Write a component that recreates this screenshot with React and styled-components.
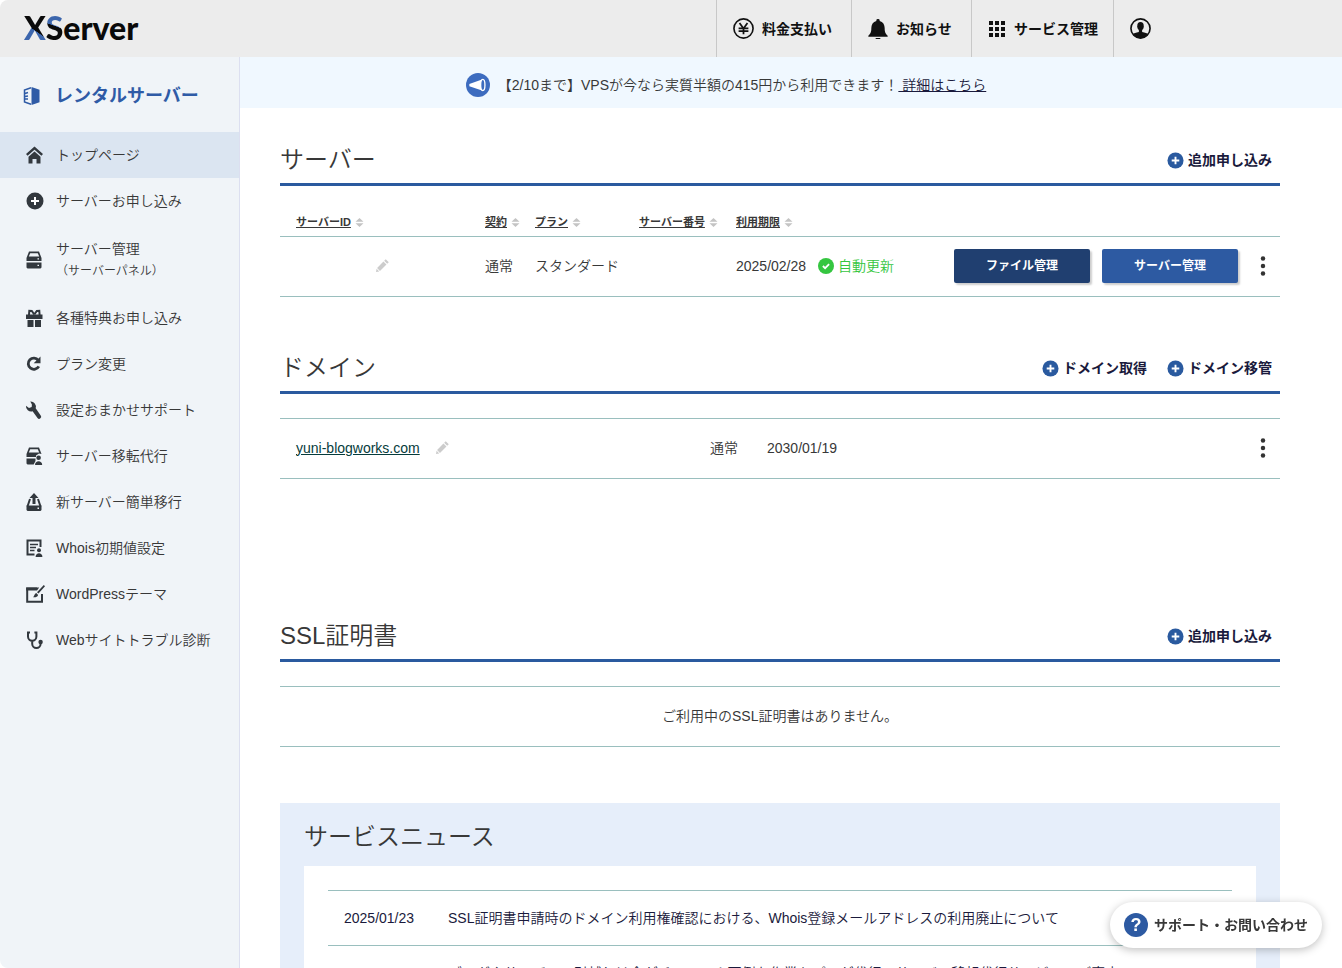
import React from 'react';
import styled, { createGlobalStyle } from 'styled-components';

const menu = [
  { icon: 'home', label: 'トップページ', active: true },
  { icon: 'plus', label: 'サーバーお申し込み' },
  { icon: 'server', label: 'サーバー管理', sub: '（サーバーパネル）' },
  { icon: 'gift', label: '各種特典お申し込み' },
  { icon: 'reload', label: 'プラン変更' },
  { icon: 'wrench', label: '設定おまかせサポート' },
  { icon: 'serverUser', label: 'サーバー移転代行' },
  { icon: 'upload', label: '新サーバー簡単移行' },
  { icon: 'whois', label: 'Whois初期値設定' },
  { icon: 'theme', label: 'WordPressテーマ' },
  { icon: 'scope', label: 'Webサイトトラブル診断' },
];

const columns = ['サーバーID', '契約', 'プラン', 'サーバー番号', '利用期限'];

const news = [
  {
    date: '2025/01/23',
    title:
      'SSL証明書申請時のドメイン利用権確認における、Whois登録メールアドレスの利用廃止について',
  },
  {
    date: '',
    title:
      'ブログやサーバーの引越しは今がチャンス！面倒な作業もプロが代行・サーバー移転代行サービスのご案内',
  },
];

const shapes = {
  home: (
    <>
      <path d="M.8 8.800 8.500 2l7.700 6.800" fill="none" stroke="currentColor" strokeWidth="2.400" />
      <path d="M2.500 10.800 8.500 5.600l6 5.200V17.500h-4v-4.600H6.500v4.600h-4z" />
    </>
  ),
  plus: (
    <>
      <circle cx="9" cy="9" r="8.500" />
      <path d="M9 5v8M5 9h8" stroke="#fff" strokeWidth="2" />
    </>
  ),
  server: (
    <>
      <path
        fillRule="evenodd"
        d="M3 .5h10L15.500 7v3H.5V7zM4.200 2.200 2.800 5.500h10.400l-1.400-3.300zM11.500 7.200v1.300H13V7.200z"
      />
      <path fillRule="evenodd" d="M.5 11.500h15v5l-1 1h-13l-1-1zM11.500 13.800v1.300H13v-1.300z" />
    </>
  ),
  gift: (
    <>
      <path d="M0 5.500h16.500V10H0zM1.500 11h6v7h-6zM9 11h6v7H9z" />
      <path
        d="M8.300 5.500 5.800 2 3.300 1.800 3 6M8.300 5.500 10.800 2l2.500-.2.3 4.200"
        fill="none"
        stroke="currentColor"
        strokeWidth="2"
      />
    </>
  ),
  reload: (
    <>
      <path d="M12.300 5.300A5.600 5.600 0 1 0 12.800 11.400" fill="none" stroke="currentColor" strokeWidth="2.800" />
      <path d="M14.500 1.500v6.800H7.700z" />
    </>
  ),
  wrench: (
    <path d="M4.300.5A5.200 5.200 0 0 1 9.700 7.200l5 7.200a2 2 0 0 1-3.200 2.600L6.600 10.300A5.200 5.200 0 0 1 0 4.700l3 2.400 2.700-1 .2-2.600z" />
  ),
  serverUser: (
    <>
      <path
        fillRule="evenodd"
        d="M3 .5h10L15.500 7 13 6.500 10 8.500V10H.5V7zM4.200 2.200 2.800 5.500h10.400l-1.400-3.300z"
      />
      <path d="M.5 11.500h9V14l-1.800 3.500H1.500l-1-1z" />
      <circle cx="12.600" cy="10.800" r="2.300" />
      <path d="M9 18c0-5 7.200-5 7.200 0z" />
    </>
  ),
  upload: (
    <>
      <path d="M8 0l4.500 5h-3v6h-3V5h-3z" />
      <path d="M4 6 1.500 13.500M12 6l2.500 7.500" fill="none" stroke="currentColor" strokeWidth="2" />
      <path fillRule="evenodd" d="M.5 12.500h15V17l-1 1h-13l-1-1zM11.500 14.500V16H13v-1.500z" />
    </>
  ),
  whois: (
    <>
      <path d="M8.500 15.500h-7v-14h13V8" fill="none" stroke="currentColor" strokeWidth="2" />
      <path d="M4 5.500h8M4 8.500h6M4 11.500h4.500" stroke="currentColor" strokeWidth="1.500" />
      <circle cx="13" cy="11.300" r="2" />
      <path d="M9.600 18c0-5 6.800-5 6.800 0z" />
    </>
  ),
  theme: (
    <>
      <path d="M11 3.500H1.200v13.300H16V9" fill="none" stroke="currentColor" strokeWidth="2" />
      <path d="M.2 2.500h13l-2.200 3H.2z" />
      <path d="m17.800 0 1.200 1.200-6.500 7.300-1.500-1.300zM10.300 8l1.800 1.900c-.8 2.200-2.500 2.500-5 2.300 1.300-1 1.200-3.600 3.200-4.200z" />
    </>
  ),
  scope: (
    <>
      <path
        d="M4 1.500H2v4a4.200 4.200 0 0 0 8.400 0v-4h-2M6.200 9.500v3.300a4.200 4.200 0 0 0 8.400 0V12"
        fill="none"
        stroke="currentColor"
        strokeWidth="2"
      />
      <circle cx="14.600" cy="11" r="2.200" />
    </>
  ),
  bell: (
    <path d="M9 0a1.500 1.500 0 0 1 1.500 1.700C13.500 2.500 15 5 15 8c0 3.800.8 5.300 2.700 7v1H.3v-1C2.200 13.300 3 11.800 3 8c0-3 1.500-5.500 4.500-6.300A1.500 1.500 0 0 1 9 0zM6.800 17h4.400a2.200 1.600 0 0 1-4.400 0z" />
  ),
  yen: (
    <>
      <circle cx="9" cy="9" r="8.200" fill="none" stroke="currentColor" strokeWidth="1.400" />
      <path
        d="M5.600 4.300 9 9l3.400-4.700M9 9v5M4.800 8.800h8.400M4.800 11.300h8.400"
        fill="none"
        stroke="currentColor"
        strokeWidth="1.500"
      />
    </>
  ),
  grid: (
    <path d="M1 1h4v4H1zM7 1h4v4H7zM13 1h4v4h-4zM1 7h4v4H1zM7 7h4v4H7zM13 7h4v4h-4zM1 13h4v4H1zM7 13h4v4H7zM13 13h4v4h-4z" />
  ),
  account: (
    <>
      <circle cx="9" cy="9" r="8.200" fill="none" stroke="currentColor" strokeWidth="1.400" />
      <ellipse cx="9" cy="7" rx="2.800" ry="3.500" />
      <path d="M7.600 9h2.800v3c2.500.5 4.500 1 5.200 2a8.200 8.200 0 0 1-13.200 0c.7-1 2.700-1.500 5.200-2z" />
    </>
  ),
  rental: (
    <>
      <path d="M8.500 0 16.500 2.800v12.400L8.500 18z" />
      <path
        d="M8 .8 1.500 3v12L8 17.200M2 6.500l3-1M2 9.500l3-.5M2 12h3"
        fill="none"
        stroke="currentColor"
        strokeWidth="1.500"
      />
    </>
  ),
  megaphone: (
    <>
      <circle cx="9" cy="9" r="9" />
      <path d="M2.500 8.200 12 4.800v8.400L2.500 10z" fill="#fff" />
      <ellipse cx="12.600" cy="9" rx="1.600" ry="4.200" fill="currentColor" stroke="#fff" strokeWidth="1" />
    </>
  ),
  pencil: <path d="M13.500.3 17.700 4.500 15.500 6.700 11.300 2.500zM10.300 3.500l4.200 4.200L5.500 16.500 1.500 12.500zM.8 13.500 4.500 17.200 0 18z" />,
  sort: <path d="M9 0l8 7.500H1zM1 10.500h16L9 18z" />,
  check: (
    <>
      <circle cx="9" cy="9" r="9" />
      <path d="m5.500 9 2.500 2.500 4.500-4.500" fill="none" stroke="#fff" strokeWidth="2" />
    </>
  ),
  dots: (
    <>
      <circle cx="9" cy="2.200" r="2" />
      <circle cx="9" cy="9" r="2" />
      <circle cx="9" cy="15.800" r="2" />
    </>
  ),
};

const Icon = ({ name, size = 18, color }) => (
  <Svg viewBox="0 0 18 18" $size={size} $color={color} aria-hidden="true">
    {shapes[name]}
  </Svg>
);

const SectionHead = ({ title, actions }) => (
  <Head>
    <Title>{title}</Title>
    <Actions>
      {actions.map((action) => (
        <AddLink href="#" key={action}>
          <Icon name="plus" size={17} color="#2a5a9f" />
          {action}
        </AddLink>
      ))}
    </Actions>
  </Head>
);

const App = () => {
  return (
    <>
      <GlobalStyle />
      <Page>
        <Header>
          <Logo href="#">
            <LogoX>X</LogoX>
            <LogoS>S</LogoS>erver
          </Logo>
          <HeaderNav>
            <HeaderLink href="#" $width={135}>
              <Icon name="yen" size={21} />
              料金支払い
            </HeaderLink>
            <HeaderLink href="#" $width={120}>
              <Icon name="bell" size={20} />
              お知らせ
            </HeaderLink>
            <HeaderLink href="#" $width={142}>
              <Icon name="grid" />
              サービス管理
            </HeaderLink>
            <HeaderLink href="#" $width={229} aria-label="アカウント">
              <Icon name="account" size={21} />
            </HeaderLink>
          </HeaderNav>
        </Header>
        <Body>
          <Sidebar>
            <Brand href="#">
              <Icon name="rental" />
              レンタルサーバー
            </Brand>
            {menu.map((item) => (
              <MenuLink href="#" key={item.label} $active={item.active} $tall={!!item.sub}>
                <Icon name={item.icon} />
                <span>
                  {item.label}
                  {item.sub && <Sub>{item.sub}</Sub>}
                </span>
              </MenuLink>
            ))}
          </Sidebar>
          <Main>
            <Banner>
              <Icon name="megaphone" size={24} color="#3d6cbf" />
              <p>
                【2/10まで】VPSが今なら実質半額の415円から利用できます！
                <BannerLink href="#">&nbsp;詳細はこちら</BannerLink>
              </p>
            </Banner>
            <Content>
              <Section $gap={40}>
                <SectionHead title="サーバー" actions={['追加申し込み']} />
                <Table>
                  <colgroup>
                    <Col $width={189} />
                    <Col $width={50} />
                    <Col $width={104} />
                    <Col $width={97} />
                    <Col />
                    <Col $width={342} />
                  </colgroup>
                  <thead>
                    <tr>
                      {columns.map((column) => (
                        <Th key={column}>
                          <SortButton type="button">
                            <u>{column}</u>
                            <Icon name="sort" size={9} color="#c4c4c4" />
                          </SortButton>
                        </Th>
                      ))}
                      <Th />
                    </tr>
                  </thead>
                  <tbody>
                    <tr>
                      <Td>
                        <EditButton type="button" aria-label="編集" $indent={80}>
                          <Icon name="pencil" size={13} color="#ccc" />
                        </EditButton>
                      </Td>
                      <Td>通常</Td>
                      <Td>スタンダード</Td>
                      <Td />
                      <Td>
                        <Line>
                          2025/02/28
                          <AutoRenew>
                            <Icon name="check" size={16} />
                            自動更新
                          </AutoRenew>
                        </Line>
                      </Td>
                      <Td>
                        <RowActions>
                          <PanelButton type="button" $dark>
                            ファイル管理
                          </PanelButton>
                          <PanelButton type="button">サーバー管理</PanelButton>
                          <DotsButton type="button" aria-label="メニュー">
                            <Icon name="dots" size={20} />
                          </DotsButton>
                        </RowActions>
                      </Td>
                    </tr>
                  </tbody>
                </Table>
              </Section>

              <Section $gap={126}>
                <SectionHead title="ドメイン" actions={['ドメイン取得', 'ドメイン移管']} />
                <Table $lined>
                  <colgroup>
                    <Col $width={414} />
                    <Col $width={57} />
                    <Col />
                    <Col $width={60} />
                  </colgroup>
                  <tbody>
                    <tr>
                      <Td>
                        <Line>
                          <DomainLink href="#">yuni-blogworks.com</DomainLink>
                          <EditButton type="button" aria-label="編集" $indent={16}>
                            <Icon name="pencil" size={13} color="#ccc" />
                          </EditButton>
                        </Line>
                      </Td>
                      <Td>通常</Td>
                      <Td>2030/01/19</Td>
                      <Td>
                        <RowActions>
                          <DotsButton type="button" aria-label="メニュー">
                            <Icon name="dots" size={20} />
                          </DotsButton>
                        </RowActions>
                      </Td>
                    </tr>
                  </tbody>
                </Table>
              </Section>

              <Section $gap={56}>
                <SectionHead title="SSL証明書" actions={['追加申し込み']} />
                <Empty>ご利用中のSSL証明書はありません。</Empty>
              </Section>

              <News>
                <Title>サービスニュース</Title>
                <NewsList>
                  {news.map((item) => (
                    <NewsItem key={item.title}>
                      <NewsDate>{item.date}</NewsDate>
                      <NewsLink href="#">{item.title}</NewsLink>
                    </NewsItem>
                  ))}
                </NewsList>
              </News>
            </Content>
          </Main>
        </Body>
        <Support type="button">
          <Question>?</Question>
          サポート・お問い合わせ
        </Support>
      </Page>
    </>
  );
};

const GlobalStyle = createGlobalStyle`
  * {
    box-sizing: border-box;
  }

  body {
    margin: 0;
    font-family: 'Liberation Sans', 'Noto Sans CJK JP', sans-serif;
    font-size: 14px;
    font-weight: 350;
    line-height: 22px;
    color: #383838;
    background: #fff;
  }

  p, h2, ul {
    margin: 0;
    padding: 0;
  }

  a {
    color: inherit;
    text-decoration: none;
  }

  button {
    padding: 0;
    border: none;
    font: inherit;
    color: inherit;
    background: none;
    cursor: pointer;
  }
`;

const Svg = styled.svg`
  flex: none;
  display: block;
  width: ${(props) => props.$size}px;
  height: ${(props) => props.$size}px;
  color: ${(props) => props.$color || 'inherit'};
  fill: currentColor;
`;

const Page = styled.div`
  display: flex;
  flex-direction: column;
  height: 100vh;
  border-radius: 8px 0 0 8px;
  overflow: hidden;
`;

const Header = styled.header`
  flex: none;
  display: flex;
  justify-content: space-between;
  height: 57px;
  background: #ececec;
`;

const Logo = styled.a`
  padding-left: 24px;
  font-family: Lato, sans-serif;
  font-size: 32px;
  font-weight: 900;
  line-height: 56px;
  color: #0a0a0a;
`;

const LogoX = styled.span`
  color: transparent;
  background: linear-gradient(35deg, #3c66ad 44%, #0a0a0a 45%);
  background-clip: text;
`;

const LogoS = styled.span`
  color: transparent;
  background: linear-gradient(200deg, #3c66ad 46%, #0a0a0a 47%);
  background-clip: text;
`;

const HeaderNav = styled.nav`
  display: flex;
`;

const HeaderLink = styled.a`
  display: flex;
  align-items: center;
  gap: 8px;
  width: ${(props) => props.$width}px;
  padding-left: 16px;
  border-left: 1px solid #c8c8c8;
  font-weight: 700;
  color: #111;
`;

const Body = styled.div`
  flex: 1;
  display: flex;
  min-height: 0;
`;

const Sidebar = styled.nav`
  flex: none;
  width: 240px;
  border-right: 1px solid #dcdff0;
  background: #f0f4f8;
`;

const Brand = styled.a`
  display: flex;
  align-items: center;
  gap: 14px;
  height: 75px;
  padding: 2px 0 0 23px;
  font-size: 18px;
  font-weight: 700;
  color: #2f5ba6;
`;

const MenuLink = styled.a`
  display: flex;
  align-items: center;
  gap: 12px;
  height: ${(props) => (props.$tall ? 71 : 46)}px;
  padding-left: 26px;
  background: ${(props) => (props.$active ? '#dbe5f1' : 'transparent')};

  svg {
    color: #32383e;
    overflow: visible;
  }
`;

const Sub = styled.small`
  display: block;
  font-size: 12px;
`;

const Main = styled.main`
  flex: 1;
  min-width: 0;
`;

const Banner = styled.div`
  display: flex;
  align-items: center;
  justify-content: center;
  gap: 8px;
  height: 51px;
  padding: 4px 130px 0 0;
  background: #f0f8ff;
`;

const BannerLink = styled.a`
  color: #1a1a3c;
  text-decoration: underline;
`;

const Content = styled.div`
  max-width: 1000px;
  margin: 21px 40px 0;
`;

const Section = styled.section`
  margin-bottom: ${(props) => props.$gap}px;
`;

const Head = styled.div`
  display: flex;
  align-items: center;
  justify-content: space-between;
  height: 57px;
  padding: 8px 8px 0 0;
  border-bottom: 3px solid #2a5a9f;
`;

const Title = styled.h2`
  font-size: 24px;
  font-weight: 350;
  line-height: 36px;
`;

const Actions = styled.div`
  display: flex;
  gap: 20px;
`;

const AddLink = styled.a`
  display: flex;
  align-items: center;
  gap: 4px;
  font-weight: 700;
  color: #1a1a3c;
`;

const Table = styled.table`
  width: 100%;
  margin-top: ${(props) => (props.$lined ? 24 : 0)}px;
  border-top: ${(props) => (props.$lined ? '1px solid #9abfbe' : 'none')};
  border-spacing: 0;
  table-layout: fixed;
  white-space: nowrap;
`;

const Col = styled.col`
  width: ${(props) => (props.$width ? `${props.$width}px` : 'auto')};
`;

const Th = styled.th`
  height: 51px;
  padding: 22px 0 0 16px;
  border-bottom: 1px solid #9abfbe;
  text-align: left;
`;

const SortButton = styled.button`
  display: flex;
  align-items: center;
  gap: 4px;
  font-size: 11px;
  font-weight: 700;
`;

const Td = styled.td`
  height: 60px;
  padding: 0 0 2px 16px;
  border-bottom: 1px solid #9abfbe;
`;

const Line = styled.div`
  display: flex;
  align-items: center;
`;

const EditButton = styled.button`
  display: block;
  margin-left: ${(props) => props.$indent}px;
`;

const AutoRenew = styled.span`
  display: flex;
  align-items: center;
  gap: 4px;
  margin-left: 12px;
  color: #35c640;
`;

const RowActions = styled.div`
  display: flex;
  align-items: center;
  justify-content: flex-end;
  gap: 12px;
  padding-right: 7px;
`;

const PanelButton = styled.button`
  width: 136px;
  height: 34px;
  border-radius: 2px;
  font-size: 12px;
  font-weight: 700;
  color: #fff;
  background: ${(props) => (props.$dark ? '#203f70' : '#2d5aa2')};
  box-shadow: 2px 2px 2px rgba(0, 0, 0, 0.2);
`;

const DotsButton = styled.button`
  margin-left: 3px;
  color: #333;
`;

const DomainLink = styled.a`
  color: #063c3c;
  text-decoration: underline;
`;

const Empty = styled.p`
  margin-top: 24px;
  border: 1px solid #9abfbe;
  border-width: 1px 0;
  line-height: 59px;
  text-align: center;
`;

const News = styled.section`
  padding: 16px 24px 24px;
  background: #e6eefa;
`;

const NewsList = styled.ul`
  margin-top: 11px;
  padding: 24px;
  list-style: none;
  background: #fff;
`;

const NewsItem = styled.li`
  display: flex;
  padding: 16px;
  border-top: 1px solid #9abfbe;
  color: #1a1a3c;
`;

const NewsDate = styled.time`
  flex: none;
  width: 104px;
`;

const NewsLink = styled.a`
  white-space: nowrap;
`;

const Support = styled.button`
  position: fixed;
  right: 20px;
  bottom: 20px;
  display: flex;
  align-items: center;
  justify-content: center;
  gap: 6px;
  width: 212px;
  height: 46px;
  border-radius: 23px;
  font-weight: 700;
  background: #fff;
  box-shadow: 0 2px 8px rgba(0, 0, 0, 0.25);
`;

const Question = styled.span`
  width: 24px;
  height: 24px;
  border-radius: 50%;
  font-size: 18px;
  line-height: 24px;
  color: #fff;
  background: #2d5aa2;
`;

export default App;
